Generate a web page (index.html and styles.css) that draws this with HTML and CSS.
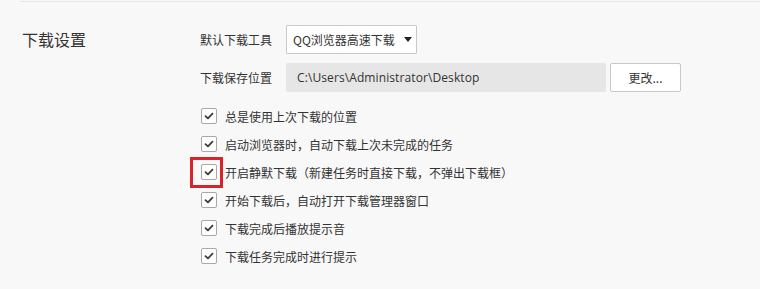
FILE: index.html
```html
<!DOCTYPE html>
<html lang="zh-CN">
<head>
<meta charset="utf-8">
<link rel="stylesheet" href="styles.css">
</head>
<body>
<div class="page">
  <div class="topline"></div>
  <div class="section">
    <div class="heading">下载设置</div>
    <div class="content">
      <div class="field">
        <span class="label">默认下载工具</span>
        <div class="select"><span class="sel-text">QQ浏览器高速下载</span><span class="arrow"></span></div>
      </div>
      <div class="field">
        <span class="label">下载保存位置</span>
        <div class="path">C:\Users\Administrator\Desktop</div>
        <div class="btn">更改...</div>
      </div>
      <div class="checks">
        <div class="check"><span class="box"><svg viewBox="0 0 16 16"><path d="M4 8.2 L6.8 10.8 L12 5.4"/></svg></span><span>总是使用上次下载的位置</span></div>
        <div class="check"><span class="box"><svg viewBox="0 0 16 16"><path d="M4 8.2 L6.8 10.8 L12 5.4"/></svg></span><span>启动浏览器时，自动下载上次未完成的任务</span></div>
        <div class="check"><span class="box"><svg viewBox="0 0 16 16"><path d="M4 8.2 L6.8 10.8 L12 5.4"/></svg><span class="highlight"></span></span><span>开启静默下载（新建任务时直接下载，不弹出下载框）</span></div>
        <div class="check"><span class="box"><svg viewBox="0 0 16 16"><path d="M4 8.2 L6.8 10.8 L12 5.4"/></svg></span><span>开始下载后，自动打开下载管理器窗口</span></div>
        <div class="check"><span class="box"><svg viewBox="0 0 16 16"><path d="M4 8.2 L6.8 10.8 L12 5.4"/></svg></span><span>下载完成后播放提示音</span></div>
        <div class="check"><span class="box"><svg viewBox="0 0 16 16"><path d="M4 8.2 L6.8 10.8 L12 5.4"/></svg></span><span>下载任务完成时进行提示</span></div>
      </div>
    </div>
  </div>
</div>
</body>
</html>
```

FILE: styles.css
```css
* { box-sizing: border-box; }
html, body {
  margin: 0;
  padding: 0;
  background: #f8f8f8;
  width: 760px;
  height: 289px;
  overflow: hidden;
}
body {
  font-family: "Noto Sans CJK SC", sans-serif;
  font-size: 12px;
  color: #333;
  text-spacing-trim: space-all;
  white-space: nowrap;
}
.page {
  padding-top: 1px;
}
.topline {
  margin-left: 20px;
  height: 1px;
  background: #e6e6e6;
}
.section {
  display: flex;
  padding-left: 22px;
  padding-top: 23px;
}
.heading {
  width: 178px;
  font-size: 16px;
  line-height: 29px;
  color: #333;
  flex-shrink: 0;
}
.content {
  display: flex;
  flex-direction: column;
  gap: 9px;
}
.field {
  display: flex;
  align-items: center;
  height: 29px;
}
.label {
  width: 86px;
  color: #333;
}
.select {
  width: 131px;
  height: 29px;
  border: 1px solid #c8c8c8;
  background: #fff;
  display: flex;
  align-items: center;
  padding-left: 6px;
  gap: 9px;
  border-radius: 1px;
}
.sel-text {
  font-size: 12px;
}
.arrow {
  width: 0;
  height: 0;
  border-left: 4.5px solid transparent;
  border-right: 4.5px solid transparent;
  border-top: 5px solid #222;
}
.path {
  width: 320px;
  height: 29px;
  background: #e6e6e6;
  border-radius: 2px;
  padding-left: 11px;
  display: flex;
  align-items: center;
  font-family: "Open Sans", "Noto Sans CJK SC", sans-serif;
  font-size: 12px;
  letter-spacing: 0.1px;
  color: #333;
}
.btn {
  margin-left: 4px;
  width: 71px;
  height: 29px;
  border: 1px solid #c8c8c8;
  background: #fff;
  border-radius: 2px;
  display: flex;
  align-items: center;
  justify-content: center;
}
.checks {
  margin-top: 1px;
  display: flex;
  flex-direction: column;
}
.check {
  display: flex;
  align-items: center;
  height: 28px;
  padding-left: 1px;
  gap: 8px;
}
.box {
  position: relative;
  width: 16px;
  height: 16px;
  border: 1px solid #a8a8a8;
  border-radius: 2px;
  background: #fff;
  flex-shrink: 0;
}
.box svg {
  display: block;
  width: 14px;
  height: 14px;
}
.box path {
  fill: none;
  stroke: #3a3a3a;
  stroke-width: 2;
  stroke-linecap: round;
  stroke-linejoin: round;
}
.highlight {
  position: absolute;
  left: -12px;
  top: -8px;
  width: 33px;
  height: 31px;
  border: 3px solid #d9232a;
}
```
